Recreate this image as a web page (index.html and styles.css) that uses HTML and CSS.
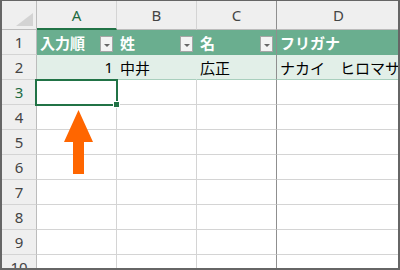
FILE: index.html
```html
<!DOCTYPE html>
<html lang="ja">

<head>
  <meta name="viewport" content="width=device-width, initial-scale=1.0">
  <title>名簿</title>
  <link rel="stylesheet" href="styles.css">
</head>

<body>
  <main class="sheet">
    <!-- column headers -->
    <div class="corner"><span class="corner-mark"></span></div>
    <div class="col-head col-selected">A</div>
    <div class="col-head">B</div>
    <div class="col-head col-freeze">C</div>
    <div class="col-head col-last">D</div>

    <!-- row 1: table header -->
    <div class="row-head">1</div>
    <div class="cell th">入力順<span class="filter"></span></div>
    <div class="cell th">姓<span class="filter"></span></div>
    <div class="cell th col-freeze">名<span class="filter"></span></div>
    <div class="cell th col-last">フリガナ</div>

    <!-- row 2: data -->
    <div class="row-head">2</div>
    <div class="cell td num">1</div>
    <div class="cell td">中井</div>
    <div class="cell td col-freeze">広正</div>
    <div class="cell td col-last">ナカイ　ヒロマサ</div>

    <!-- row 3: active cell -->
    <div class="row-head row-selected">3</div>
    <div class="cell active"><span class="cursor"><span class="handle"></span></span></div>
    <div class="cell"></div>
    <div class="cell col-freeze"></div>
    <div class="cell col-last"></div>

    <div class="row-head">4</div>
    <div class="cell"></div>
    <div class="cell"></div>
    <div class="cell col-freeze"></div>
    <div class="cell col-last"></div>

    <div class="row-head">5</div>
    <div class="cell"></div>
    <div class="cell"></div>
    <div class="cell col-freeze"></div>
    <div class="cell col-last"></div>

    <div class="row-head">6</div>
    <div class="cell"></div>
    <div class="cell"></div>
    <div class="cell col-freeze"></div>
    <div class="cell col-last"></div>

    <div class="row-head">7</div>
    <div class="cell"></div>
    <div class="cell"></div>
    <div class="cell col-freeze"></div>
    <div class="cell col-last"></div>

    <div class="row-head">8</div>
    <div class="cell"></div>
    <div class="cell"></div>
    <div class="cell col-freeze"></div>
    <div class="cell col-last"></div>

    <div class="row-head">9</div>
    <div class="cell"></div>
    <div class="cell"></div>
    <div class="cell col-freeze"></div>
    <div class="cell col-last"></div>

    <div class="row-head">10</div>
    <div class="cell"></div>
    <div class="cell"></div>
    <div class="cell col-freeze"></div>
    <div class="cell col-last"></div>

    <!-- pointer to the active cell -->
    <svg class="arrow" width="31" height="66" viewBox="0 0 31 66">
      <polygon points="15.5,0 30,32 21,32 21,64 10,64 10,32 1,32" fill="#ff6600" />
    </svg>
  </main>
</body>

</html>
```

FILE: styles.css
```css
html,
body {
  margin: 0;
  padding: 0;
}

body {
  width: 400px;
  height: 270px;
  font-family: "Noto Sans", "Noto Sans CJK JP", sans-serif;
  background-color: white;
}

.sheet {
  position: relative;
  box-sizing: border-box;
  width: 400px;
  height: 270px;
  overflow: hidden;
  border-style: solid;
  border-color: #666666;
  border-width: 1px 2px 2px 2px;
  display: grid;
  grid-template-columns: 35px 80px 80px 80px 1fr;
  grid-template-rows: 29px;
  grid-auto-rows: 25px;
  background-color: white;
}

.sheet > div {
  box-sizing: border-box;
  border-right: 1px solid #d4d4d4;
  border-bottom: 1px solid #d4d4d4;
}

.corner {
  position: relative;
  background-color: #efefef;
  border-right-color: #bcbcbc !important;
  border-bottom-color: #bcbcbc !important;
}

.corner-mark {
  position: absolute;
  right: 3px;
  bottom: 3px;
  width: 0;
  height: 0;
  border-left: 17px solid transparent;
  border-bottom: 13px solid #d3d3d3;
}

.col-head {
  background-color: #efefef;
  border-bottom-color: #bcbcbc !important;
  color: #444444;
  font-size: 15px;
  display: flex;
  justify-content: center;
  align-items: center;
}

.col-selected {
  color: #1e6b42;
  border-bottom: 2px solid #217346 !important;
}

.row-head {
  background-color: #efefef;
  border-right-color: #bcbcbc !important;
  color: #444444;
  font-size: 15px;
  display: flex;
  justify-content: center;
  align-items: center;
}

.row-selected {
  color: #1e6b42;
}

.cell {
  font-size: 15px;
  display: flex;
  align-items: center;
  padding-left: 3px;
  white-space: nowrap;
}

.th {
  position: relative;
  background-color: #6aae8f;
  color: white;
  font-weight: bold;
  border-right-color: #6aae8f !important;
  border-bottom-color: #6aae8f !important;
}

.td {
  background-color: #e2efe8;
  color: black;
  border-right-color: #e2efe8 !important;
  border-bottom-color: #a9cfbd !important;
}

.num {
  justify-content: flex-end;
  padding-right: 3px;
}

.col-freeze {
  border-right: 1px solid #8f8f8f !important;
}

.col-last {
  border-right: none !important;
}

.filter {
  position: absolute;
  right: 3px;
  bottom: 2px;
  box-sizing: border-box;
  width: 13px;
  height: 16px;
  border: 1px solid #a6a6a6;
  background-color: #f3f3f3;
}

.filter::after {
  content: "";
  position: absolute;
  left: 3px;
  top: 7px;
  border-left: 3px solid transparent;
  border-right: 3px solid transparent;
  border-top: 3px solid #666666;
}

.active {
  position: relative;
}

.cursor {
  position: absolute;
  left: -2px;
  top: -1px;
  box-sizing: border-box;
  width: 83px;
  height: 27px;
  border: 2px solid #217346;
  z-index: 2;
}

.handle {
  position: absolute;
  right: -4px;
  bottom: -4px;
  width: 5px;
  height: 5px;
  background-color: #217346;
  border: 1px solid white;
}

.arrow {
  position: absolute;
  left: 61px;
  top: 109px;
}
```
